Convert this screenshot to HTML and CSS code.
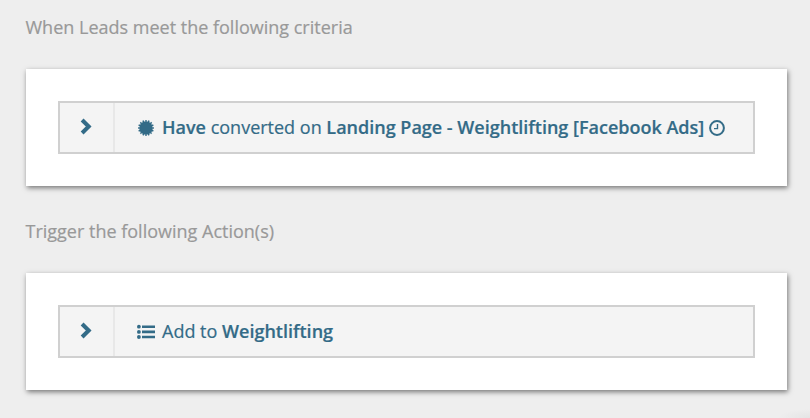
FILE: index.html
```html
<!DOCTYPE html>
<html lang="en">
	<head>
		<meta charset="utf-8">
		<title>Automation Rule</title>
		<link rel="stylesheet" href="styles.css">
	</head>
	<body>
		<section class="step">
			<h2>When Leads meet the following criteria</h2>
			<div class="card">
				<div class="rule">
					<div class="toggle">
						<svg class="chevron" width="12" height="17" viewBox="0 0 12 17"><path d="M2.1 2 L8.7 8.5 L2.1 15"/></svg>
					</div>
					<div class="summary">
						<svg class="icon" width="20" height="18" viewBox="0 0 20 18">
							<circle cx="10" cy="9" r="6.8" fill="currentColor"/>
							<circle class="teeth" cx="10" cy="9" r="7.1" pathLength="32"/>
						</svg>
						<span class="text"><b>Have</b> converted on <b>Landing Page - Weightlifting [Facebook Ads]</b></span>
						<svg class="clock" width="16" height="16" viewBox="0 0 16 16">
							<circle cx="8" cy="8" r="6.9"/>
							<path d="M8.5 4 V8.6 H5"/>
						</svg>
					</div>
				</div>
			</div>
		</section>
		<section class="step">
			<h2>Trigger the following Action(s)</h2>
			<div class="card">
				<div class="rule">
					<div class="toggle">
						<svg class="chevron" width="12" height="17" viewBox="0 0 12 17"><path d="M2.1 2 L8.7 8.5 L2.1 15"/></svg>
					</div>
					<div class="summary">
						<svg class="icon" width="20" height="18" viewBox="0 0 20 18" fill="currentColor">
							<circle cx="2.9" cy="3.7" r="1.9"/>
							<circle cx="2.9" cy="8.9" r="1.9"/>
							<circle cx="2.9" cy="14" r="1.9"/>
							<path d="M6 2.5h13v2.6H6z M6 7.6h13v2.6H6z M6 12.7h13v2.6H6z"/>
						</svg>
						<span class="text">Add to <b>Weightlifting</b></span>
					</div>
				</div>
			</div>
		</section>
	</body>
</html>
```

FILE: styles.css
```css
* {
	box-sizing: border-box;
}

body {
	margin: 0;
	padding: 15px 23px 0 26px;
	height: 418px;
	overflow: hidden;
	background: radial-gradient(ellipse 32px 9px at 100% 100%, #e4e4e4, #eee) #eee;
	font-family: "Open Sans", sans-serif;
	font-size: 18px;
	line-height: 25px;
	-webkit-text-stroke: 0.2px;
}

.step {
	height: 204px;
}

.step h2 {
	margin: 0 0 29px;
	color: #999;
	font-size: 18px;
	font-weight: 400;
	text-indent: -0.5px;
}

.card {
	height: 117px;
	padding: 32px;
	background: #fff;
	box-shadow: 1px 2px 5px rgba(0, 0, 0, 0.5);
}

.rule {
	display: flex;
	height: 53px;
	border: 2px solid #d0d0d0;
	background: #f4f4f4;
	color: #336b87;
}

.toggle {
	display: flex;
	align-items: center;
	width: 55px;
	padding: 0 0 3px 20px;
	border-right: 2px solid #e8e8e8;
}

.chevron {
	fill: none;
	stroke: currentColor;
	stroke-width: 4;
}

.summary {
	display: flex;
	align-items: center;
	padding-left: 21px;
	white-space: nowrap;
}

.summary b {
	font-weight: 600;
}

.icon {
	margin-right: 6px;
}

.teeth {
	fill: none;
	stroke: currentColor;
	stroke-width: 1.8;
	stroke-dasharray: 1 1;
	stroke-dashoffset: 0.5;
}

.clock {
	margin-left: 5px;
	fill: none;
	stroke: currentColor;
	stroke-width: 2;
}

.clock path {
	stroke-width: 1.4;
}
```
